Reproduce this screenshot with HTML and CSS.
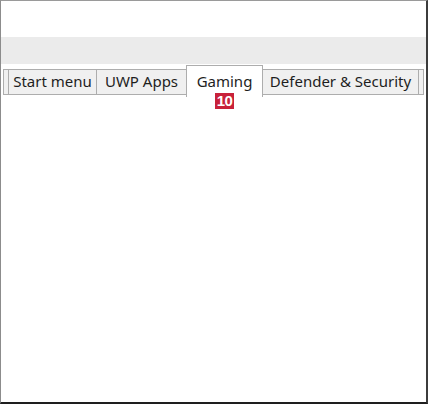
FILE: index.html
```html
<!DOCTYPE html>
<html>
<head>
<meta charset="utf-8">
<link rel="stylesheet" href="styles.css">
</head>
<body>
<div class="window">
  <div class="topspace"></div>
  <div class="band"></div>
  <div class="tabstrip">
    <div class="tab stub"></div>
    <div class="tab t-start">Start menu</div>
    <div class="tab t-uwp">UWP Apps</div>
    <div class="tab t-gaming selected">Gaming<span class="badge">10</span></div>
    <div class="tab t-def">Defender &amp; Security</div>
    <div class="tab stub"></div>
  </div>
  <div class="content"></div>
</div>
</body>
</html>
```
FILE: styles.css
```css
html, body {
  margin: 0;
  padding: 0;
  background: #fff;
}
.window {
  width: 428px;
  height: 404px;
  box-sizing: border-box;
  border-left: 1px solid #8c8c8c;
  border-top: 1px solid #9a9a9a;
  border-right: 2px solid #3c3c3c;
  border-bottom: 2px solid #1e1e1e;
  background: #fff;
  display: flex;
  flex-direction: column;
  font-family: "Segoe UI", "Noto Sans", "Open Sans", sans-serif;
  overflow: hidden;
}
.topspace {
  height: 36px;
}
.band {
  height: 27px;
  background: #ebebeb;
}
.tabstrip {
  display: flex;
  align-items: flex-start;
  padding-left: 2px;
  padding-top: 1px;
  height: 33px;
}
.tab {
  position: relative;
  box-sizing: border-box;
  flex: none;
  margin-top: 4px;
  height: 26px;
  border: 1px solid #adadad;
  background: #f0f0f0;
  margin-left: -1px;
  padding: 0;
  font-size: 15px;
  line-height: 23px;
  color: #1e1e1e;
  text-align: center;
  white-space: nowrap;
}
.tab:first-child {
  margin-left: 0;
}
.tab.stub {
  width: 6px;
}
.t-start { width: 89px; }
.t-uwp { width: 91px; }
.t-gaming { width: 77px; }
.t-def { width: 157px; }
.tab.selected {
  margin-top: 0;
  height: 32px;
  background: #fff;
  border-bottom: none;
  padding-top: 4px;
  z-index: 1;
}
.badge {
  position: absolute;
  left: 28px;
  top: 27px;
  width: 19px;
  height: 16px;
  background: #c8213a;
  color: #fff;
  font-family: "Liberation Sans", Arial, sans-serif;
  font-weight: bold;
  font-size: 15px;
  line-height: 16px;
  text-align: center;
  letter-spacing: -0.5px;
}
.content {
  flex: 1;
}
```
